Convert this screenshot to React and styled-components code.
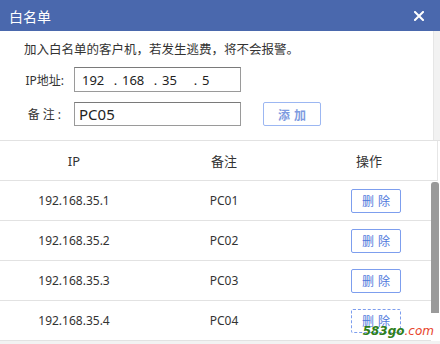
import React from 'react'
import styled, { createGlobalStyle } from 'styled-components'

const GlobalStyle = createGlobalStyle`
    body {
        margin: 0;
        background: #fff;
        font-family: "Noto Sans", "Noto Sans CJK SC", sans-serif;
        color: #333;
    }
`

const Window = styled.div`
    position: relative;
    width: 440px;
    height: 344px;
    overflow: hidden;
    background: #f2f2f2;
`

const TitleBar = styled.div`
    height: 31px;
    background: #4a68ad;
    display: flex;
    align-items: center;
    justify-content: space-between;
    padding: 0 16px 0 9px;
    color: #fff;
    font-size: 14px;
`

const Form = styled.div`
    width: 434px;
    background: #fff;
    border-right: 1px solid #e6e6e6;
    padding: 9px 0 14px 24px;
    box-sizing: border-box;
`

const Note = styled.div`
    font-size: 12.5px;
    line-height: 20px;
    margin-bottom: 7px;
`

const FieldRow = styled.div`
    display: flex;
    align-items: center;
    margin-top: ${p => p.$gap || 0}px;
`

const Label = styled.span`
    width: 40px;
    font-size: 12px;
    text-align: right;
    letter-spacing: ${p => p.$spread ? '3px' : '0'};
    margin-right: 10px;
    white-space: nowrap;
`

const InputBox = styled.div`
    width: 167px;
    height: ${p => p.$h}px;
    box-sizing: border-box;
    border: 1px solid #9a9a9a;
    border-top-color: #7a7a7a;
    display: flex;
    align-items: center;
    padding-left: ${p => p.$pad}px;
    font-size: ${p => p.$size}px;
    color: #222;
`

const Octet = styled.span`
    width: 27px;
`

const Dot = styled.span`
    width: 13px;
    text-align: center;
`

const OutlineButton = styled.button`
    width: ${p => p.$w}px;
    height: 24px;
    box-sizing: border-box;
    background: #fff;
    border: 1px ${p => p.$dashed ? 'dashed' : 'solid'} ${p => p.$light ? '#9cb7f2' : '#7d9eee'};
    border-radius: 2px;
    color: ${p => p.$light ? '#7e9be0' : '#4f78dc'};
    font-family: "Noto Sans CJK SC", sans-serif;
    font-size: 12px;
    font-weight: ${p => p.$light ? 700 : 400};
    letter-spacing: 4px;
    padding: 0 0 0 4px;
    cursor: pointer;
`

const AddButton = styled(OutlineButton)`
    margin-left: 22px;
`

const Table = styled.div`
    background: #fff;
    border-top: 1px solid #e2e2e2;
`

const HeaderRow = styled.div`
    display: grid;
    grid-template-columns: 148px 152px 138px;
    height: 40px;
    align-items: center;
    font-size: 13px;
    border-bottom: 1px solid #e2e2e2;
    border-right: 1px solid #e6e6e6;
    width: 438px;
    box-sizing: border-box;
`

const Cell = styled.div`
    text-align: ${p => p.$left ? 'left' : 'center'};
    padding-left: ${p => p.$left ? 51 : 0}px;
    white-space: nowrap;
`

const BodyWrap = styled.div`
    display: flex;
`

const Rows = styled.div`
    width: 431px;
    overflow: hidden;
`

const Row = styled.div`
    display: grid;
    grid-template-columns: 148px 152px 152px;
    height: 39px;
    align-items: center;
    font-size: 12px;
    border-bottom: 1px solid #e2e2e2;
`

const ScrollTrack = styled.div`
    width: 9px;
    background: #fff;
    padding-top: 1px;
`

const Thumb = styled.div`
    width: 8px;
    height: 131px;
    background: #9a9a9a;
    border-radius: 3px 3px 0 0;
`

const Watermark = styled.div`
    position: absolute;
    right: 6px;
    bottom: 6px;
    font-family: "DejaVu Sans", sans-serif;
    font-size: 12px;
    font-style: italic;
    font-weight: 700;
    color: #2f7f1c;
    & > span {
        color: #e8452c;
        font-weight: 400;
    }
`

const CloseIcon = () => (
    <svg width="10" height="10" viewBox="0 0 10 10">
        <path d="M1 1 L9 9 M9 1 L1 9" stroke="#fff" strokeWidth="2" strokeLinecap="square" />
    </svg>
)

const rows = [
    { ip: '192.168.35.1', note: 'PC01' },
    { ip: '192.168.35.2', note: 'PC02' },
    { ip: '192.168.35.3', note: 'PC03' },
    { ip: '192.168.35.4', note: 'PC04', dashed: true },
]

export default function App() {
    return (
        <Window>
            <GlobalStyle />
            <TitleBar>
                <span>白名单</span>
                <CloseIcon />
            </TitleBar>
            <Form>
                <Note>加入白名单的客户机，若发生逃费，将不会报警。</Note>
                <FieldRow>
                    <Label>IP地址:</Label>
                    <InputBox $h={25} $pad={7} $size={13}>
                        <Octet>192</Octet><Dot>.</Dot>
                        <Octet>168</Octet><Dot>.</Dot>
                        <Octet>35</Octet><Dot>.</Dot>
                        <Octet>5</Octet>
                    </InputBox>
                </FieldRow>
                <FieldRow $gap={10}>
                    <Label $spread>备注:</Label>
                    <InputBox $h={24} $pad={4} $size={15}>PC05</InputBox>
                    <AddButton $w={58} $light>添加</AddButton>
                </FieldRow>
            </Form>
            <Table>
                <HeaderRow>
                    <Cell>IP</Cell>
                    <Cell>备注</Cell>
                    <Cell>操作</Cell>
                </HeaderRow>
                <BodyWrap>
                    <Rows>
                        {rows.map(r => (
                            <Row key={r.ip}>
                                <Cell>{r.ip}</Cell>
                                <Cell>{r.note}</Cell>
                                <Cell $left>
                                    <OutlineButton $w={50} $dashed={r.dashed}>删除</OutlineButton>
                                </Cell>
                            </Row>
                        ))}
                    </Rows>
                    <ScrollTrack>
                        <Thumb />
                    </ScrollTrack>
                </BodyWrap>
            </Table>
            <Watermark>583go<span>.com</span></Watermark>
        </Window>
    )
}
